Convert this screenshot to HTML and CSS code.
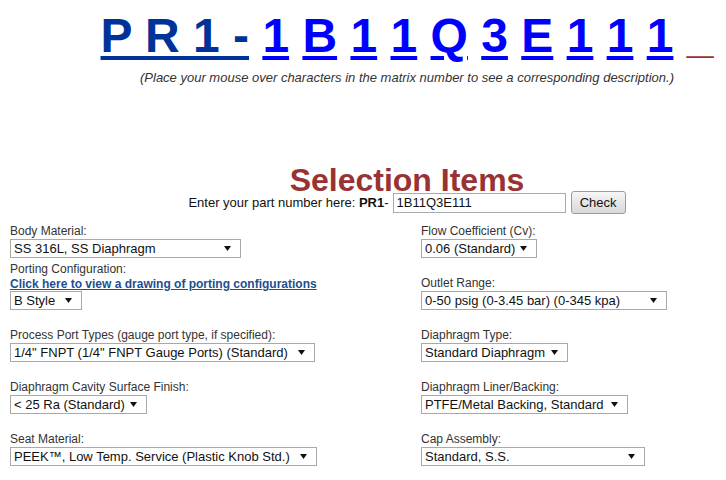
FILE: index.html
```html
<!DOCTYPE html>
<html lang="en">
<head>
<meta charset="utf-8">
<title>PR1 Selection</title>
<link rel="stylesheet" href="styles.css">
</head>
<body>
<div class="page">
  <div class="head">
    <div class="matrix"><a class="base" href="#">P R 1 -</a> <a href="#">1</a> <a href="#">B</a> <a href="#">1</a> <a href="#">1</a> <a href="#">Q</a> <a href="#">3</a> <a href="#">E</a> <a href="#">1</a> <a href="#">1</a> <a href="#">1</a> <span class="blank">_</span></div>
    <p class="hint">(Place your mouse over characters in the matrix number to see a corresponding description.)</p>

    <h1 class="title">Selection Items</h1>
    <div class="entry">
      <span>Enter your part number here: <b>PR1</b>-</span>
      <input class="part" type="text" value="1B11Q3E111">
      <button class="check" type="button">Check</button>
    </div>
  </div>

  <div class="fields">
    <div class="col">
      <div class="field tight">
        <div class="label">Body Material:</div>
        <select class="w231"><option>SS 316L, SS Diaphragm</option></select>
      </div>
      <div class="field">
        <div class="label">Porting Configuration:</div>
        <a class="drawing" href="#">Click here to view a drawing of porting configurations</a>
        <select class="w72"><option>B Style</option></select>
      </div>
      <div class="field">
        <div class="label">Process Port Types (gauge port type, if specified):</div>
        <select class="w305"><option>1/4" FNPT (1/4" FNPT Gauge Ports) (Standard)</option></select>
      </div>
      <div class="field">
        <div class="label">Diaphragm Cavity Surface Finish:</div>
        <select class="w137"><option>&lt; 25 Ra (Standard)</option></select>
      </div>
      <div class="field">
        <div class="label">Seat Material:</div>
        <select class="w307"><option>PEEK™, Low Temp. Service (Plastic Knob Std.)</option></select>
      </div>
    </div>
    <div class="col">
      <div class="field">
        <div class="label">Flow Coefficient (Cv):</div>
        <select class="w116"><option>0.06 (Standard)</option></select>
      </div>
      <div class="field">
        <div class="label">Outlet Range:</div>
        <select class="w246"><option>0-50 psig (0-3.45 bar) (0-345 kpa)</option></select>
      </div>
      <div class="field">
        <div class="label">Diaphragm Type:</div>
        <select class="w147"><option>Standard Diaphragm</option></select>
      </div>
      <div class="field">
        <div class="label">Diaphragm Liner/Backing:</div>
        <select class="w207"><option>PTFE/Metal Backing, Standard</option></select>
      </div>
      <div class="field">
        <div class="label">Cap Assembly:</div>
        <select class="w224"><option>Standard, S.S.</option></select>
      </div>
    </div>
  </div>
</div>
</body>
</html>
```

FILE: styles.css
```css
html {
  overflow: hidden;
}
body {
  margin: 8px;
  background: #ffffff;
  font-family: "Liberation Sans", Arial, sans-serif;
  color: #222;
}
.page {
  width: 710px;
}
.head {
  padding-left: 88px;
}
.matrix {
  text-align: center;
  font-size: 48px;
  font-weight: bold;
  line-height: 55px;
  white-space: nowrap;
}
.matrix a {
  color: #0000ff;
  text-decoration: underline;
  text-decoration-thickness: 4px;
  text-underline-offset: 4px;
}
.matrix a.base {
  color: #003399;
}
.matrix .blank {
  color: #993333;
}
.hint {
  margin: 7px 0 0;
  text-align: center;
  font-size: 13px;
  line-height: 15px;
  font-style: italic;
  color: #333;
  white-space: nowrap;
}
.title {
  margin: 85px 0 0;
  text-align: center;
  font-size: 32px;
  line-height: 20px;
  font-weight: bold;
  color: #993333;
}
.entry {
  display: flex;
  justify-content: center;
  align-items: center;
  gap: 4px;
  height: 23px;
  margin-top: 1px;
  font-size: 13px;
  color: #111;
}
.part {
  box-sizing: border-box;
  width: 173px;
  height: 20px;
  margin: 0;
  padding: 0 3px;
  border: 1px solid #a9abb3;
  font-family: "Liberation Sans", Arial, sans-serif;
  font-size: 13px;
  color: #111;
}
.check {
  box-sizing: border-box;
  width: 55px;
  height: 23px;
  margin: 0 0 0 1px;
  padding: 0;
  border: 1px solid #8c9cbd;
  border-radius: 3px;
  background: linear-gradient(#f7f7f7, #e6e6e6 50%, #d9d9d9);
  font-family: "Liberation Sans", Arial, sans-serif;
  font-size: 13px;
  color: #111;
}
.fields {
  display: grid;
  grid-template-columns: 411px 1fr;
  margin-top: 10px;
}
.col {
  padding-left: 2px;
}
.field {
  margin-bottom: 18px;
}
.field.tight {
  margin-bottom: 4px;
}
.label {
  font-size: 12px;
  line-height: 15px;
  color: #333;
}
.drawing {
  display: block;
  font-size: 12px;
  line-height: 14px;
  font-weight: bold;
  color: #1d4f8f;
  text-decoration: underline;
}
select {
  display: block;
  box-sizing: border-box;
  height: 19px;
  margin: 0;
  padding: 0 0 0 3px;
  border: 1px solid #a9a9a9;
  border-radius: 0;
  -webkit-appearance: none;
  appearance: none;
  background: #fff url("data:image/svg+xml,%3Csvg xmlns='http://www.w3.org/2000/svg' width='7' height='5'%3E%3Cpath d='M0 0h7L3.5 5z' fill='%23111'/%3E%3C/svg%3E") no-repeat right 9px center;
  font-family: "Liberation Sans", Arial, sans-serif;
  font-size: 13px;
  color: #111;
}
.w72 { width: 72px; }
.w116 { width: 116px; }
.w137 { width: 137px; }
.w147 { width: 147px; }
.w207 { width: 207px; }
.w224 { width: 224px; }
.w231 { width: 231px; }
.w246 { width: 246px; }
.w305 { width: 305px; }
.w307 { width: 307px; }
```
